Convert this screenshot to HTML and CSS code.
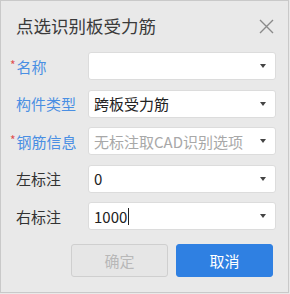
FILE: index.html
```html
<!DOCTYPE html>
<html lang="zh-CN">
<head>
  <meta charset="UTF-8" />
  <title>点选识别板受力筋</title>
  <link rel="stylesheet" href="styles.css">
</head>
<body>
  <div class="dialog">
    <div class="dialog-header">
      <span class="dialog-title">点选识别板受力筋</span>
      <svg class="close" width="15" height="15" viewBox="0 0 15 15">
        <path d="M1 1 L14 14 M14 1 L1 14" stroke="#8a8a8a" stroke-width="1.4" fill="none" />
      </svg>
    </div>

    <div class="form">
      <div class="row">
        <label class="label blue"><span class="req">*</span>名称</label>
        <div class="select"><span class="value"></span><i class="caret"></i></div>
      </div>
      <div class="row">
        <label class="label blue">构件类型</label>
        <div class="select"><span class="value">跨板受力筋</span><i class="caret"></i></div>
      </div>
      <div class="row">
        <label class="label blue"><span class="req">*</span>钢筋信息</label>
        <div class="select"><span class="value placeholder">无标注取CAD识别选项</span><i class="caret"></i></div>
      </div>
      <div class="row">
        <label class="label">左标注</label>
        <div class="select"><span class="value">0</span><i class="caret"></i></div>
      </div>
      <div class="row">
        <label class="label">右标注</label>
        <div class="select"><span class="value">1000<span class="cursor"></span></span><i class="caret"></i></div>
      </div>
    </div>

    <div class="actions">
      <button class="btn btn-disabled" disabled>确定</button>
      <button class="btn btn-primary">取消</button>
    </div>
  </div>
</body>
</html>
```

FILE: styles.css
```css
body {
  margin: 0;
  font-family: "Noto Sans CJK SC", "Noto Sans", sans-serif;
  background: #e9e9e9;
}
.dialog {
  width: 287px;
  height: 291px;
  border: 1px solid #c9c9c9;
  background: #e9e9e9;
}
.dialog-header {
  display: flex;
  align-items: center;
  justify-content: space-between;
  padding: 12px 14px 0 15px;
  height: 26px;
}
.dialog-title {
  font-size: 17.5px;
  line-height: 26px;
  color: #3a3a3a;
}
.form {
  display: flex;
  flex-direction: column;
  gap: 9.5px;
  margin-top: 13px;
}
.row {
  display: flex;
  align-items: center;
  height: 28px;
}
.label {
  width: 72px;
  padding-left: 15px;
  font-size: 15px;
  color: #333;
  white-space: nowrap;
}
.label.blue {
  color: #4a8fe3;
}
.req {
  color: #e05050;
  font-size: 12px;
  margin-left: -6px;
  margin-right: 1px;
  vertical-align: 3px;
}
.select {
  width: 172px;
  height: 26px;
  background: #fff;
  border: 1px solid #dcdcdc;
  border-radius: 3px;
  display: flex;
  align-items: center;
  justify-content: space-between;
  padding: 0 9px 0 5px;
}
.value {
  font-size: 15px;
  color: #222;
  display: flex;
  align-items: center;
}
.value.placeholder {
  color: #a8a8a8;
}
.cursor {
  display: inline-block;
  width: 1px;
  height: 17px;
  background: #222;
  margin-left: 1px;
}
.caret {
  width: 0;
  height: 0;
  border-left: 3px solid transparent;
  border-right: 3px solid transparent;
  border-top: 4px solid #444;
}
.actions {
  display: flex;
  justify-content: flex-end;
  gap: 8px;
  padding-right: 15px;
  margin-top: 14px;
}
.btn {
  width: 97px;
  height: 33px;
  border-radius: 3px;
  font-family: inherit;
  font-size: 15px;
}
.btn-disabled {
  background: #e6e6e6;
  border: 1px solid #cfcfcf;
  color: #b8b8b8;
}
.btn-primary {
  background: #2f80e2;
  border: 1px solid #2f80e2;
  color: #fff;
}
```
